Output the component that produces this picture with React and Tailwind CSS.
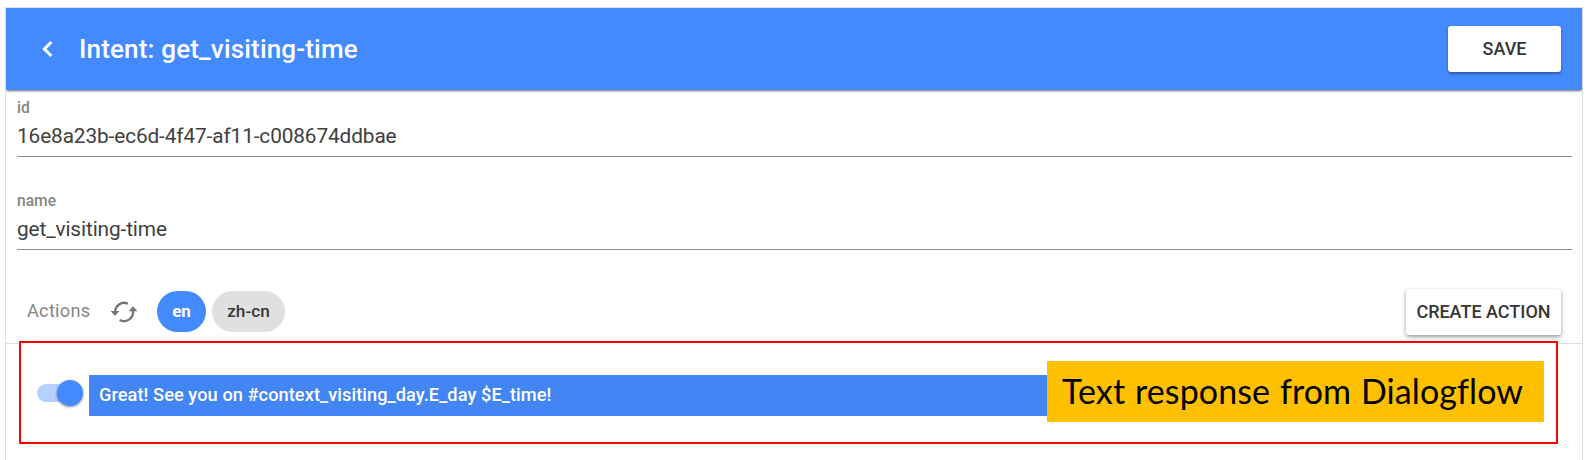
function SyncIcon() {
  return (
    <svg width="28" height="24" viewBox="0 0 28 24" className="block" fill="none" stroke="#747474" strokeWidth="2.3">
      <path d="M5.2 12.5A9 9 0 0 1 18 3.7" />
      <path d="M22.8 10.5A9 9 0 0 1 9.6 20" />
      <path d="M0.6 11H9.4L5 16Z" fill="#747474" stroke="none" />
      <path d="M18.6 11.3H27.4L23 6.3Z" fill="#747474" stroke="none" />
    </svg>
  );
}

function Field({ label, value, className }) {
  return (
    <div className={`border-b border-[#8c8c8c] ${className}`}>
      <div className="h-[23px] text-[15.6px] leading-[23px] font-medium text-[#868686]">{label}</div>
      <div className="h-[32px] text-[20.8px] leading-[32px] tracking-[-0.11px] text-[#404040]">{value}</div>
    </div>
  );
}

export default function App() {
  return (
    <div className="h-[460px] w-[1591px] overflow-hidden bg-white pt-[7px] pl-[5px] font-['Roboto',sans-serif]">
      <div className="h-[453px] w-[1578px] border border-b-0 border-[#dedede]">
        <header className="relative flex h-[82px] items-center bg-[#448aff] pr-[21px] pl-[35px] shadow-[0_2px_2px_-1px_rgba(0,0,0,0.6)]">
          <svg width="12" height="18" viewBox="0 0 12 18" className="block" fill="none" stroke="white" strokeWidth="3.1">
            <path d="M10.4 2L3.4 9L10.4 16" />
          </svg>
          <h1 className="ml-[26px] grow text-[26px] leading-[32px] font-medium tracking-[0.17px] text-white">Intent: get_visiting-time</h1>
          <button className="h-[46px] w-[113px] rounded-[3px] bg-white pb-px text-[18px] font-medium text-[#363636] shadow-[0_2px_3px_rgba(0,0,0,0.35)]">
            SAVE
          </button>
        </header>

        <Field label="id" value="16e8a23b-ec6d-4f47-af11-c008674ddbae" className="mt-[7px] mr-[10px] ml-[11px] h-[60px]" />
        <Field label="name" value="get_visiting-time" className="mt-[33px] mr-[10px] ml-[11px] h-[60px]" />

        <div className="flex h-[94px] items-center border-b border-[#dedede] pt-[31px] pr-[20px] pl-[21px]">
          <span className="-mt-[2px] w-[62px] text-[18.2px] tracking-[0.25px] text-[#868686]">Actions</span>
          <span className="ml-[21px]">
            <SyncIcon />
          </span>
          <span className="-mt-px ml-[19px] flex h-[41px] w-[49px] items-center justify-center rounded-[20.5px] bg-[#448aff] text-[17px] font-bold text-white">
            en
          </span>
          <span className="-mt-px ml-[6px] flex h-[41px] w-[73px] items-center justify-center rounded-[20.5px] bg-[#e0e0e0] text-[17.2px] font-medium text-[#363636]">
            zh-cn
          </span>
          <button className="mr-px ml-auto h-[46px] w-[155px] rounded-[3px] bg-white pb-[2px] text-[18px] font-medium whitespace-nowrap text-[#363636] shadow-[0_2px_4px_rgba(0,0,0,0.4)]">
            CREATE ACTION
          </button>
        </div>

        <div className="relative -mt-[3px] ml-[13px] flex h-[103px] w-[1539px] items-center border-2 border-[#ff0000] bg-white pl-[16px]">
          <div className="flex h-[18px] w-[46px] items-center justify-end rounded-full bg-linear-to-r from-[#b4d0ff] from-75% to-transparent to-75%">
            <div className="size-[26px] shrink-0 rounded-full bg-[#448aff] shadow-[0_1px_3px_rgba(0,0,0,0.45)]" />
          </div>
          <div className="mt-[5px] ml-[6px] h-[41px] w-[1455px] bg-[#4285f4] pl-[10px] text-[18.2px] leading-[39px] font-medium tracking-[0.07px] text-white">
            Great! See you on #context_visiting_day.E_day $E_time!
          </div>
          <div className="absolute top-[18px] left-[1026px] h-[61px] w-[497px] bg-[#ffc000] pl-[15px] font-['Lato',sans-serif] text-[34px] leading-[60px] tracking-[0.1px] [word-spacing:1px] whitespace-nowrap text-black">
            Text response from Dialogflow
          </div>
        </div>
      </div>
    </div>
  );
}
